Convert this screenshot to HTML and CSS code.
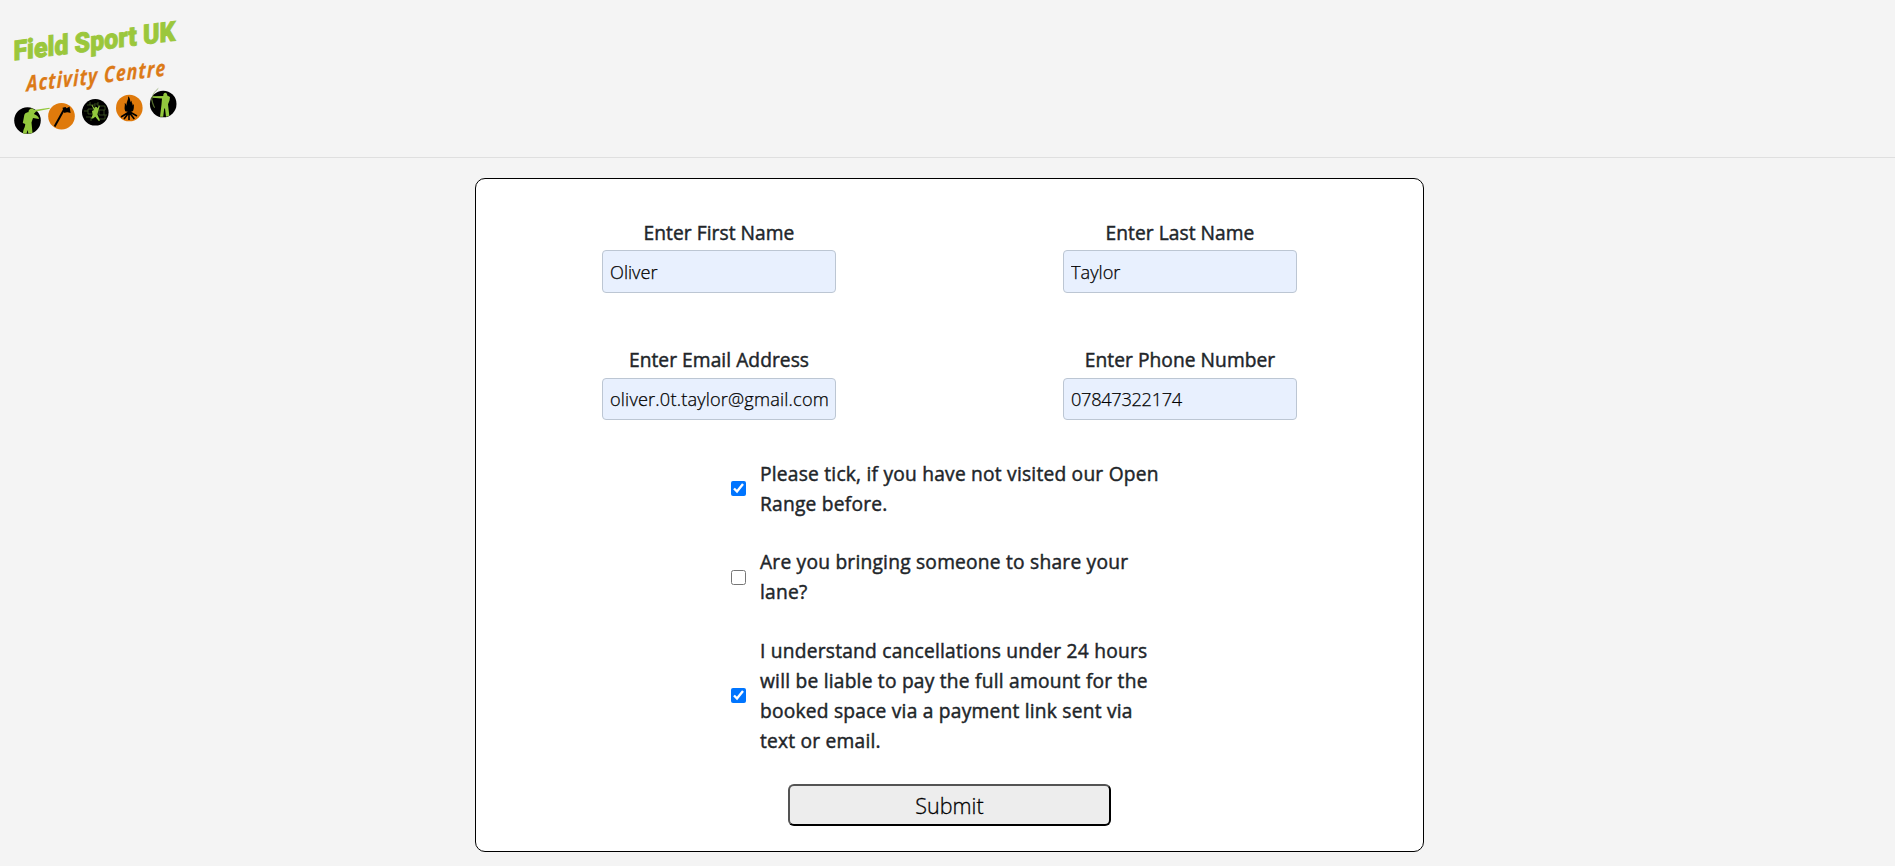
FILE: index.html
```html
<!DOCTYPE html>
<html lang="en">
<head>
<meta charset="utf-8">
<title>Field Sport UK Activity Centre</title>
<link rel="stylesheet" href="styles.css">
</head>
<body>
<header class="site-header">
  <svg class="logo" viewBox="0 0 190 150" role="img" aria-label="Field Sport UK Activity Centre">
    <g transform="translate(13.5 60.4) skewY(-7)">
      <text class="logo-title" textLength="162" lengthAdjust="spacingAndGlyphs">Field Sport UK</text>
    </g>
    <g transform="translate(26.5 91.5) skewY(-6.5)">
      <text class="logo-sub" textLength="140" lengthAdjust="spacingAndGlyphs">Activity Centre</text>
    </g>
    <g class="shooter">
      <circle cx="27.5" cy="120.5" r="13.3" fill="#000"/>
      <path fill="#93c83d" d="M23 133.5 C23 129 25.5 127 25.2 124 L22.8 123 L24.3 115 C25 112.5 28 112.5 28.5 112 C28.5 108.5 33 107.5 34 110 L49.5 107.7 L49.8 108.8 L36 111.5 L33.8 114 C37 115 39 117 39 119 L33 118 L31.5 122.5 L32.5 133 L28.5 133.7 L27.5 130 L26.5 133.8 Z"/>
    </g>
    <g class="axe">
      <circle cx="61.5" cy="116.2" r="13.3" fill="#df7a0c"/>
      <path stroke="#000" stroke-width="2" d="M54.6 126.4 L64.6 108.5"/>
      <path fill="#000" d="M62.5 107.8 L65.5 107 L66.5 108.3 C68 107.7 69 107 69.5 106.5 L70.6 113 C68.3 112.1 66 112 64.5 113 L63.5 111.5 Z"/>
    </g>
    <g class="climber">
      <circle cx="95.3" cy="112.3" r="13.3" fill="#000"/>
      <path class="bricks" d="M87 105h8v4h-7v5h4M98 102v4h7v4h-6v5h8M90 102v3M86 117h5v4M104 110v5M98 119h7v-4M88 111h-4M94 104h4"/>
      <path fill="#93c83d" d="M91.5 105 L92.2 104.7 L94.6 108.7 C94.3 106.5 97.5 106.3 97.5 108.5 L99 105.5 L99.8 106 L98 112 L97.4 114.5 L100 120.5 L98.8 121 L95.3 116.7 L93 118.5 L91 118.4 L92.6 115 L92 111 L94 110 Z"/>
    </g>
    <g class="campfire">
      <circle cx="129.3" cy="108" r="13.3" fill="#df7a0c"/>
      <path fill="#000" d="M125.5 111.5 C123.7 108 125.3 106.5 124.7 103 C126.4 104 126.5 105.5 126.7 106 C126 101.5 128.8 100 128 96.3 C130.3 98 130 100.3 130.5 102 L131.7 100.5 C131.2 103 132.9 103 132.6 105.5 L134 104 C133.6 107 134.5 109 132.3 111.5 Z"/>
      <path stroke="#000" stroke-width="1.6" d="M121 117 L133 109.5M124 119 L131 110M129 120 L129 111M134.3 119 L127 109.5M137 116 L125.5 109.5"/>
    </g>
    <g class="archer">
      <circle cx="163.2" cy="104" r="13.3" fill="#000"/>
      <path fill="#93c83d" d="M152.5 96.3 L163.3 96.1 C162.6 91.8 167.5 91.4 167.2 95.5 L170 97 L169.5 100.5 L168 104.3 L169.3 115.8 L166 116.8 L165 108.5 L164.2 108.5 L163.2 116.8 L160 116.8 L161.5 104.5 L162 98.5 L152.5 97.7 Z"/>
      <path class="bow" d="M158.3 88.4 C152 93.5 149.8 100 154.5 107.7 M151 98 L154.5 107.7"/>
    </g>
  </svg>
</header>
<main class="card">
  <form class="booking">
    <div class="fields">
      <label class="field"><span class="label">Enter First Name</span><input class="input" type="text" value="Oliver"></label>
      <label class="field"><span class="label">Enter Last Name</span><input class="input" type="text" value="Taylor"></label>
      <label class="field"><span class="label">Enter Email Address</span><input class="input email" type="text" value="oliver.0t.taylor@gmail.com"></label>
      <label class="field"><span class="label">Enter Phone Number</span><input class="input phone" type="text" value="07847322174"></label>
    </div>
    <div class="checks">
      <label class="check"><input class="box" type="checkbox" checked><span>Please tick, if you have not visited our Open<br>Range before.</span></label>
      <label class="check"><input class="box" type="checkbox"><span>Are you bringing someone to share your<br>lane?</span></label>
      <label class="check"><input class="box" type="checkbox" checked><span>I understand cancellations under 24 hours<br>will be liable to pay the full amount for the<br>booked space via a payment link sent via<br>text or email.</span></label>
    </div>
    <button class="submit" type="button">Submit</button>
  </form>
</main>
</body>
</html>
```
FILE: styles.css
```css
* { box-sizing: border-box; }
body {
  margin: 0;
  height: 866px;
  overflow: hidden;
  background: #f4f4f4;
  color: #212529;
  font-family: "Open Sans", "Noto Sans", sans-serif;
}
.site-header {
  height: 158px;
  border-bottom: 1px solid #dfdfdf;
}
.logo { display: block; width: 190px; height: 150px; overflow: visible; }
.logo-title {
  font: 900 27.5px "Roboto", sans-serif;
  fill: #9bc73c;
  stroke: #9bc73c;
  stroke-width: 0.9px;
}
.logo-sub {
  font: italic 700 22px "Open Sans", sans-serif;
  fill: #dc7a17;
  stroke: #dc7a17;
  stroke-width: 0.3px;
  letter-spacing: 1.5px;
}
.bricks { fill: none; stroke: #48662a; stroke-width: 0.7; }
.bow { fill: none; stroke: #6f8f3c; stroke-width: 0.6; }
.card {
  width: 949px;
  height: 674px;
  margin: 20px 0 0 475px;
  border: 1px solid #000;
  border-radius: 10px;
  background: #fff;
}
.booking { display: flex; flex-direction: column; align-items: center; padding-top: 39px; }
.fields { display: grid; grid-template-columns: 234px 234px; column-gap: 227px; row-gap: 42px; }
.field { display: flex; flex-direction: column; align-items: center; height: 85px; }
.field .label { margin-bottom: 2px; }
.label, .check {
  font-size: 19.2px;
  font-weight: 400;
  line-height: 30px;
  white-space: nowrap;
  -webkit-text-stroke: 0.45px #212529;
}
.label { letter-spacing: 0.05px; }
.input {
  width: 234px;
  height: 43px;
  flex: none;
  padding: 0 7px;
  border: 1px solid #bcc6d3;
  border-radius: 4px;
  background: #e8f0fe;
  color: #000;
  font: 300 18.2px "Open Sans", sans-serif;
  -webkit-text-stroke: 0.25px #000;
}
.email, .phone { height: 42px; margin-top: 0.5px; }
.email { letter-spacing: 0.17px; }
.phone { letter-spacing: -0.3px; }
.checks { display: flex; flex-direction: column; gap: 28.5px; width: 437px; margin-top: 28.5px; }
.check { display: flex; align-items: center; gap: 14px; letter-spacing: 0.22px; }
.box { width: 15px; height: 15px; margin: 0; flex: none; }
.submit {
  width: 323px;
  height: 42px;
  margin-top: 28.5px;
  padding: 0;
  border: 2px outset #000;
  border-radius: 6px;
  background: #ededed;
  color: #000;
  font: 300 21.5px "Open Sans", sans-serif;
  -webkit-text-stroke: 0.3px #000;
}
```
